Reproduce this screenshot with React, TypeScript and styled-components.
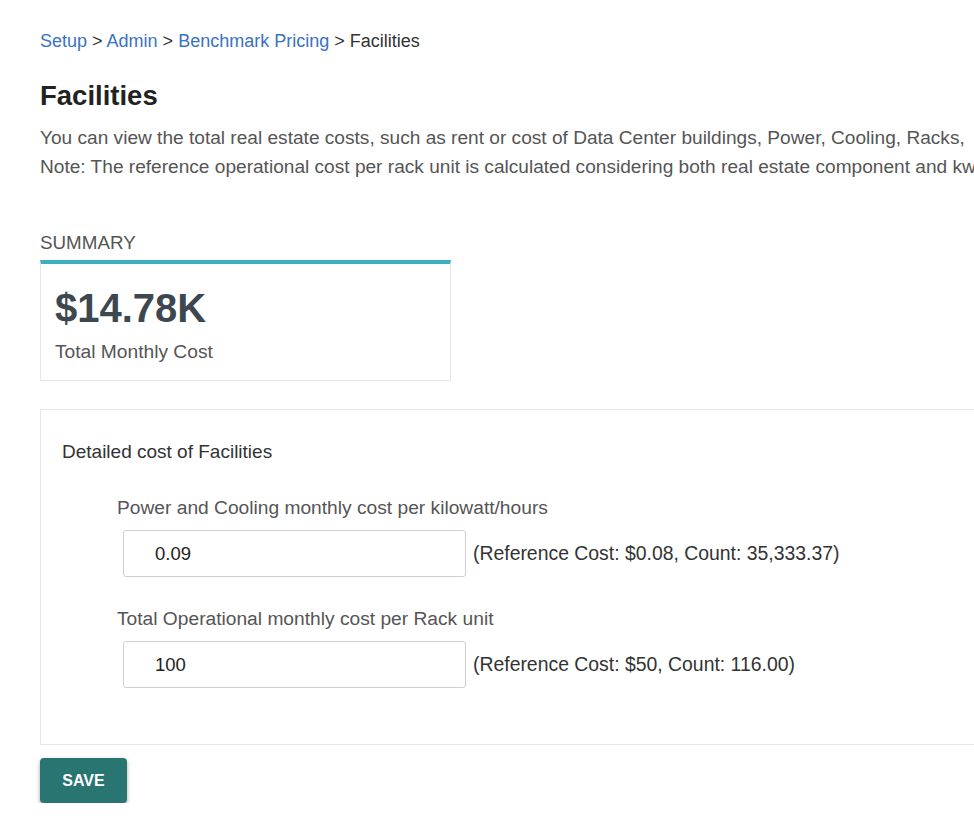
import React from "react";
import styled, { createGlobalStyle } from "styled-components";

const GlobalStyle = createGlobalStyle`
  html, body {
    margin: 0;
    padding: 0;
    background: #ffffff;
    overflow: hidden;
  }
  body {
    font-family: "Liberation Sans", Arial, Helvetica, sans-serif;
    color: #333;
  }
`;

const Page = styled.div`
  width: 1200px;
  padding: 30px 0 0 40px;
  box-sizing: border-box;
`;

const Breadcrumb = styled.div`
  font-size: 18px;
  line-height: 22px;
  color: #333;
  white-space: nowrap;
`;

const Crumb = styled.a`
  color: #3a72c4;
  text-decoration: none;
`;

const Title = styled.h1`
  margin: 28px 0 0;
  font-size: 27.5px;
  line-height: 32px;
  font-weight: bold;
  color: #222;
`;

const Description = styled.p`
  margin: 11px 0 0;
  font-size: 19.1px;
  line-height: 29px;
  color: #555;
  white-space: nowrap;
`;

const SectionLabel = styled.div`
  margin-top: 51px;
  font-size: 18.8px;
  line-height: 22px;
  color: #555;
  text-transform: uppercase;
`;

const SummaryCard = styled.div`
  margin-top: 6px;
  width: 411px;
  box-sizing: border-box;
  border: 1px solid #e6e6e6;
  border-top: 4px solid #3aafc0;
  padding: 22px 14px 17px;
`;

const BigValue = styled.div`
  font-size: 40px;
  line-height: 44px;
  font-weight: bold;
  color: #3d4750;
`;

const ValueCaption = styled.div`
  margin-top: 11px;
  font-size: 19.2px;
  line-height: 22px;
  color: #555;
`;

const DetailPanel = styled.div`
  margin-top: 28px;
  width: 1000px;
  box-sizing: border-box;
  border: 1px solid #e6e6e6;
  padding: 31px 21px 56px;
`;

const PanelTitle = styled.div`
  font-size: 19px;
  line-height: 22px;
  color: #333;
`;

const FieldGroup = styled.div`
  margin: 34px 0 0 55px;
  & + & {
    margin-top: 31px;
  }
`;

const FieldLabel = styled.div`
  font-size: 19.2px;
  line-height: 22px;
  color: #555;
`;

const FieldRow = styled.div`
  display: flex;
  align-items: center;
  gap: 7px;
  margin-top: 11px;
  margin-left: 6px;
`;

const NumberInput = styled.input`
  width: 343px;
  height: 47px;
  box-sizing: border-box;
  border: 1px solid #cfcfcf;
  border-radius: 3px;
  padding: 0 31px;
  font-family: "Liberation Sans", Arial, sans-serif;
  font-size: 18.5px;
  color: #222;
  outline: none;
`;

const Reference = styled.span`
  font-size: 19.4px;
  color: #333;
  white-space: nowrap;
`;

const SaveButton = styled.button`
  margin-top: 13px;
  width: 87px;
  height: 45px;
  border: none;
  border-radius: 4px;
  background: #287571;
  color: #fff;
  font-family: "Liberation Sans", Arial, sans-serif;
  font-size: 16px;
  font-weight: bold;
  box-shadow: 0 2px 4px rgba(0, 0, 0, 0.35);
  cursor: pointer;
`;

const fields = [
  {
    label: "Power and Cooling monthly cost per kilowatt/hours",
    value: "0.09",
    reference: "(Reference Cost: $0.08, Count: 35,333.37)",
  },
  {
    label: "Total Operational monthly cost per Rack unit",
    value: "100",
    reference: "(Reference Cost: $50, Count: 116.00)",
  },
];

export default function App() {
  return (
    <>
      <GlobalStyle />
      <Page>
        <Breadcrumb>
          <Crumb href="#">Setup</Crumb> &gt; <Crumb href="#">Admin</Crumb> &gt;{" "}
          <Crumb href="#">Benchmark Pricing</Crumb> &gt; Facilities
        </Breadcrumb>
        <Title>Facilities</Title>
        <Description>
          You can view the total real estate costs, such as rent or cost of Data Center buildings, Power, Cooling, Racks,
          <br />
          Note: The reference operational cost per rack unit is calculated considering both real estate component and kwh
        </Description>

        <SectionLabel>Summary</SectionLabel>
        <SummaryCard>
          <BigValue>$14.78K</BigValue>
          <ValueCaption>Total Monthly Cost</ValueCaption>
        </SummaryCard>

        <DetailPanel>
          <PanelTitle>Detailed cost of Facilities</PanelTitle>
          {fields.map((f) => (
            <FieldGroup key={f.label}>
              <FieldLabel>{f.label}</FieldLabel>
              <FieldRow>
                <NumberInput defaultValue={f.value} />
                <Reference>{f.reference}</Reference>
              </FieldRow>
            </FieldGroup>
          ))}
        </DetailPanel>

        <SaveButton>SAVE</SaveButton>
      </Page>
    </>
  );
}
